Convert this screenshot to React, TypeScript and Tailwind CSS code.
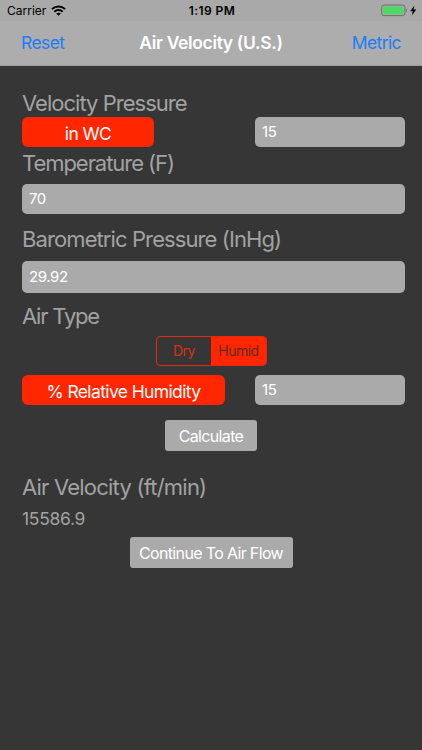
import { ReactNode, useState } from "react";
import clsx from "clsx";

const WifiIcon = () => (
	<svg width="15" height="11" viewBox="0 0 15 11" fill="none" stroke="black" strokeWidth="2">
		<path d="M0.9 4.1C4.6 0.5 10.4 0.5 14.1 4.1" />
		<path d="M3.4 6.7C5.7 4.5 9.3 4.5 11.6 6.7" />
		<path d="M7.5 10.8L5.2 8.5C6.5 7.4 8.5 7.4 9.8 8.5Z" fill="black" stroke="none" />
	</svg>
);

const BatteryIcon = () => (
	<svg width="36" height="13" viewBox="0 0 36 13">
		<rect x="0.6" y="1" width="23.4" height="10.6" rx="2.4" fill="none" stroke="#6f6f6f" strokeWidth="1" />
		<rect x="2" y="2.4" width="20.6" height="7.8" rx="1.2" fill="#4cd964" />
		<path d="M25.2 4.4C26.3 4.8 26.3 7.8 25.2 8.2Z" fill="#6f6f6f" />
		<path d="M33.4 1.4L29.2 7.2H31.8L30.9 11.4L35.3 5.4H32.6Z" fill="black" />
	</svg>
);

const StatusBar = () => (
	<div className="h-[21px] grid grid-cols-3 items-center pl-[7px] pr-[5px] pt-px text-black bg-[#a9a9a9]">
		<div className="flex items-start gap-[5px] text-[12px] leading-none">
			<span>Carrier</span>
			<WifiIcon />
		</div>
		<span className="text-center text-[12px] leading-none font-semibold tracking-[0.45px]">1:19 PM</span>
		<div className="flex justify-end pb-0.5">
			<BatteryIcon />
		</div>
	</div>
);

const Label = ({ children, classname }: { children: ReactNode; classname?: string }) => (
	<h2 className={clsx("text-[22px] leading-[26px] text-[#a2a2a2]", classname)}>{children}</h2>
);

const Field = ({ value, classname }: { value: string; classname?: string }) => (
	<div
		className={clsx(
			"min-h-[30px] flex items-center rounded-[5px] bg-[#aaaaaa] px-[7px] pb-0.5 text-[15px] leading-none tracking-[-0.4px] text-white",
			classname
		)}
	>
		{value}
	</div>
);

const UnitButton = ({ text, classname }: { text: string; classname?: string }) => (
	<button
		className={clsx(
			"h-[30px] rounded-[6px] bg-[#ff2600] pt-[3px] text-[17.5px] leading-none tracking-[-0.62px] text-white",
			classname
		)}
	>
		{text}
	</button>
);

const ActionButton = ({ text, classname }: { text: string; classname?: string }) => (
	<button
		className={clsx(
			"h-[31px] self-center rounded-[3px] bg-[#aaaaaa] text-[16px] leading-none tracking-[-0.65px] text-white",
			classname
		)}
	>
		{text}
	</button>
);

const App = () => {
	const [airType, setAirType] = useState("Humid");

	return (
		<div className="w-full h-[750px] flex flex-col overflow-hidden bg-[#363636] font-['Inter',sans-serif]">
			<StatusBar />
			<header className="h-[45px] grid grid-cols-[1fr_auto_1fr] items-center border-b border-[#9c9c9c] bg-[#adadad] px-[21px] text-[17.5px] leading-none">
				<button className="justify-self-start tracking-[-0.6px] text-[#1f7df2]">Reset</button>
				<h1 className="font-semibold tracking-[-0.35px] text-white">Air Velocity (U.S.)</h1>
				<button className="justify-self-end tracking-[-0.6px] text-[#1f7df2]">Metric</button>
			</header>
			<main className="flex flex-col pl-[22px] pr-[17px] pt-6">
				<Label classname="tracking-[-0.98px]">Velocity Pressure</Label>
				<div className="flex justify-between mt-px">
					<UnitButton text="in WC" classname="w-[132px]" />
					<Field value="15" classname="w-[150px]" />
				</div>
				<Label classname="mt-[3px] tracking-[-1.05px]">Temperature (F)</Label>
				<Field value="70" classname="mt-2" />
				<Label classname="mt-3 tracking-[-0.9px]">Barometric Pressure (InHg)</Label>
				<Field value="29.92" classname="mt-[9px] h-8" />
				<Label classname="mt-[10px] tracking-[-1.2px]">Air Type</Label>
				<div className="ml-[134px] mt-[7px] flex h-[30px] w-[111px] overflow-hidden rounded-[4px] border border-[#e42b0d] text-[14px] leading-none tracking-[-0.5px]">
					{["Dry", "Humid"].map((type) => (
						<button
							key={type}
							onClick={() => setAirType(type)}
							className={clsx(
								"first:w-[54px] last:flex-1",
								airType === type ? "bg-[#ff2600] text-[#5c2d22]" : "text-[#d62f14]"
							)}
						>
							{type}
						</button>
					))}
				</div>
				<div className="flex justify-between mt-[9px]">
					<UnitButton text="% Relative Humidity" classname="w-[203px]" />
					<Field value="15" classname="w-[150px]" />
				</div>
				<ActionButton text="Calculate" classname="mt-[15px] w-[92px] -ml-[5px]" />
				<Label classname="mt-[23px] tracking-[-0.78px]">Air Velocity (ft/min)</Label>
				<p className="mt-[7px] text-[17.5px] leading-6 tracking-[-0.3px] text-[#a2a2a2]">15586.9</p>
				<ActionButton text="Continue To Air Flow" classname="mt-[6px] w-[163px] -ml-[5px]" />
			</main>
		</div>
	);
};

export default App;
